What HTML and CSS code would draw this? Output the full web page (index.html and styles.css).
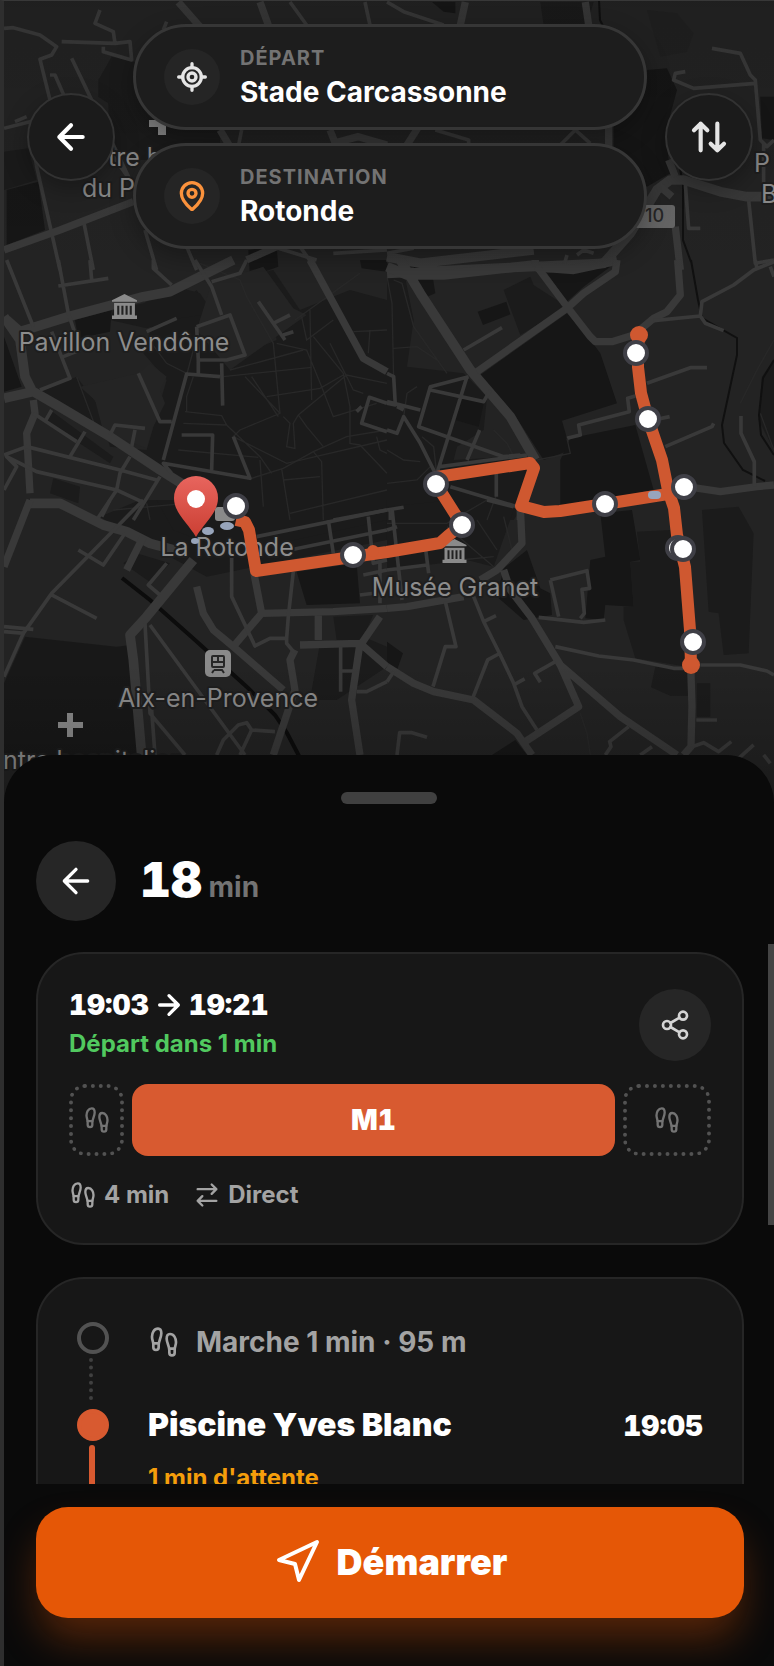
FILE: index.html
```html
<!DOCTYPE html>
<html lang="fr">
<head>
    <meta charset="UTF-8" />
    <meta name="viewport" content="width=device-width, initial-scale=1.0" />
    <title>Stade Carcassonne - Rotonde</title>
    <link rel="stylesheet" href="styles.css">
</head>
<body>
    <!-- shared icons -->
    <svg class="sprite" aria-hidden="true">
        <symbol id="arrow-left" viewBox="0 0 24 24"><path d="m12 19-7-7 7-7M19 12H5" /></symbol>
        <symbol id="arrow-right" viewBox="0 0 24 24"><path d="m12 5 7 7-7 7M5 12h14" /></symbol>
        <symbol id="footprints" viewBox="0 0 24 24">
            <path d="M4 16v-2.38C4 11.5 2.97 10.5 3 8c.03-2.72 1.49-6 4.5-6C9.37 2 10 3.8 10 5.5c0 3.11-2 5.66-2 8.68V16a2 2 0 1 1-4 0Z" />
            <path d="M20 20v-2.38c0-2.12 1.03-3.12 1-5.62-.03-2.72-1.49-6-4.5-6C14.63 6 14 7.8 14 9.5c0 3.11 2 5.66 2 8.68V20a2 2 0 1 0 4 0Z" />
            <path d="M16 17h4M4 13h4" />
        </symbol>
        <symbol id="museum" viewBox="0 0 72 72">
            <path d="M36 0 72 18v4H0v-4ZM6 26h60v36h6v10H0V62h6Z" />
            <path class="museum-gap" d="M18 34v26M30 34v26M42 34v26M54 34v26" />
        </symbol>
    </svg>

    <div class="app">
        <div class="map">
            <svg class="map-canvas" viewBox="4 1 770 840" preserveAspectRatio="xMidYMin slice">
                <defs>
                    <linearGradient id="pin-fill" x1="0" y1="0" x2="0" y2="1">
                        <stop offset="0" stop-color="#e8655e" />
                        <stop offset="1" stop-color="#cb3f33" />
                    </linearGradient>
                </defs>

                <!-- parks and built-up areas -->
                <g transform="scale(.3333)">
                    <path class="area" d="M335 170 400 185 660 390V480H400L330 440 325 310 295 290V240Z" />
                    <path class="area-dark" d="M20 570 115 545 135 690 20 735Z" />
                    <path class="area" d="M12 455 85 445 110 540 12 570Z" />
                    <path class="area-dark" d="M745 750 830 740 835 800 750 830Z" />
                </g>
                <g transform="translate(387 0) scale(.3333)">
                    <path class="area-dark" d="M135 6H205V40L170 35Z" />
                    <path class="area" d="M460 6H620L600 75H470Z" />
                    <path class="area-dark" d="M780 210 840 205 870 270 835 400 850 520 780 560 680 440V380Z" />
                    <path class="area-dark" d="M1120 290H1161V420L1125 415Z" />
                    <path class="area" d="M780 30 870 40 920 100 900 155 820 170Z" opacity=".3" />
                </g>
                <g transform="translate(0 260) scale(.3333)">
                    <path class="area" d="M120 395 230 350 290 430 330 560 440 570 500 360 430 280 455 200 590 90 640 170 690 170 735 280 830 240 780 40 820 30 900 150 1050 90 1161 120V780H650L480 630Z" />
                    <path class="area" d="M530 80 600 100 640 160 540 175 440 205 330 180 340 150 430 130Z" />
                    <path class="area-dark" d="M225 180 335 150 330 215 235 235Z" />
                    <path class="area-dark" d="M12 230 65 380 12 395Z" />
                    <path class="area-dark" d="M1080 0H1161V35L1085 25Z" />
                    <path class="area" d="M150 450 340 590 330 610 140 485ZM160 655 240 680 235 730 150 700Z" />
                    <path class="land" d="M240 380 415 340 450 310 500 350 480 390 495 430 460 500 440 565 310 515 285 420Z" />
                    <path class="land" d="M635 70 790 20 880 145 920 165 690 330 590 210Z" />
                </g>
                <g transform="translate(387 260) scale(.3333)">
                    <path class="area" d="M0 10 50 30 80 180 60 320 230 340 300 410 290 510 210 560 200 600 380 590 450 605 420 720 380 780H0Z" />
                    <path class="area-dark" d="M280 345 540 160 610 240 640 280 690 430 525 482 550 570 470 600 380 460Z" />
                    <path class="area-dark" d="M480 40 670 20 590 80 540 125Z" />
                    <path class="area-dark" d="M520 600 550 535 745 495 800 690 520 740Z" />
                    <path class="area" d="M350 90 430 50 440 75 540 140 400 225Z" />
                    <path class="area-dark" d="M272 155 358 125 370 163 288 195ZM215 410 290 430 275 500 205 480Z" />
                    <path class="area" d="M1161 300 1125 350 1115 480 1161 570Z" />
                    <path class="area-dark" d="M75 30Q90 0 130 5L145 100 110 115Z" />
                </g>
                <g transform="translate(0 500) scale(.3333)">
                    <path class="area-dark" d="M75 410 350 440 390 435 415 765H12V550Z" opacity=".75" />
                    <path class="area" d="M300 50 420 0H1161V120L620 230 400 110Z" />
                    <path class="area-dark" d="M890 215 1070 190 1080 310 920 315Z" />
                    <path class="area" d="M1000 350 1120 345 1090 410 1161 440V500L1010 600H930L960 430 1010 420ZM410 160 510 190 455 250 370 190Z" />
                    <path class="area" d="M470 0H1161V60L700 160 520 90Z" />
                </g>
                <g transform="translate(387 500) scale(.3333)">
                    <path class="area" d="M0 20 200 0H380V30L320 200 240 180 0 210Z" />
                    <path class="area-dark" d="M640 40 735 30 760 180 730 185 740 320 655 315 650 360 595 355 610 180 655 170Z" />
                    <path class="area" d="M750 95 850 90 870 130 900 500 745 475 710 360V320H740L730 185H760Z" />
                    <path class="area" d="M945 30 1055 20 1100 100 1085 460 1010 465 995 340 965 335Z" />
                    <path class="area-dark" d="M350 205 420 150 460 265 490 280 495 345 410 360 330 290Z" />
                    <path class="area" d="M805 500 900 510 905 587H850L792 562ZM930 550H970V650H930Z" />
                    <path class="area-dark" d="M315 765 385 720 420 765ZM0 425 48 460 30 510 0 490Z" />
                </g>

                <!-- alleys of the old town -->
                <g class="lane" transform="translate(0 260) scale(.3333)">
                    <path d="M600 10 720 60 740 110 820 250 840 460 720 510 700 530 860 610 1161 540M670 350 935 322M690 330 910 270M560 345 580 270 600 190M555 455 665 467 680 495 780 590 815 640M550 490 680 495M535 570 775 592M560 455V410L580 350" />
                    <path d="M735 350 840 460M755 350 835 470M850 470 870 490 860 560 885 565 880 490 895 465 1040 345 1161 370M895 465 920 500 970 560M885 180 1080 40M830 250 920 270 965 380 1000 470 1130 430M800 410 960 385 1030 345M930 150 935 420M940 230 1030 340 1050 440 1050 550 1080 555 1161 640M1060 215 1161 210M1110 210 1105 280" />
                    <path d="M755 655 850 625 940 575 1040 530 1161 510M845 625 870 780M940 575 965 605 970 780M1130 530 1140 570 1161 580M850 660 960 650M870 760 1161 690M780 600 790 740M905 170 920 240 1000 180M990 250 1060 390 1090 400M340 750 560 730M440 730 450 780M230 350 290 510M440 230 500 310 560 340" />
                </g>
                <g class="lane" transform="translate(387 260) scale(.3333)">
                    <path d="M0 50 15 130 20 360M20 60 45 70 80 200 180 340M20 265 90 260 150 300M90 380 60 400 50 470M0 570 50 600 100 605M105 530 140 560 150 650M0 670 90 660 130 620M320 510 360 550 380 590M1161 240 1110 330 1060 430M1120 460 1161 570M300 780 330 700" />
                </g>
                <g class="lane" transform="translate(387 500) scale(.3333)">
                    <path d="M0 70 180 70 300 0M180 80 320 200M220 180 320 170M270 60 330 150M350 50 380 170M580 640 600 700 610 765" />
                </g>

                <!-- railway -->
                <path class="rail" d="M122 578 150 600 195 640 248 688 275 715 287 733 299 756" />
                <path class="river" d="M599 0 600 20 610 40M680 168 683 185 683 240 691 262M691 260 698 300 702 318 737 338 737 355 722 425 724 443 743 470 765 481M774 360 763 378 759 415 761 435 774 455" />

                <!-- streets -->
                <g class="street" transform="scale(.3333)">
                    <path class="avenue" d="M535 6 600 80M780 6 805 75" />
                    <path d="M12 85 40 83 120 105 170 140 155 165 120 178 150 300M300 30 285 70 340 95 345 130 390 125 395 180 310 155V140M345 130 185 125M500 65 490 90M870 6 920 75M1095 6 1110 75" />
                    <path d="M150 225H165L215 340M215 175 270 290 400 560M45 365 80 350M12 385 90 365 110 500 180 810M250 660 280 810M340 470 390 540M435 690 470 810M560 740 590 810" />
                    <path class="avenue" d="M12 750 180 690 400 605M740 780 830 740" />
                    <path class="avenue" d="M660 390 690 440M990 390 1010 440M1000 430 1075 410 1161 435" />
                    <path d="M725 390 715 440M820 740 950 780M900 740 950 810M1161 750 1000 760" />
                </g>
                <g class="street" transform="translate(387 0) scale(.3333)">
                    <path class="avenue" d="M235 6 220 75M595 6 605 75M95 380 60 435M665 380V440" />
                    <path d="M0 6 50 35 170 75M145 390 245 420V440M520 435 565 390 610 430M895 215 865 220 860 240 920 265 1105 250M975 145 1060 160 1090 225 1105 240 1120 420 1140 440 1161 420M1130 430V560M895 550 905 685H940M1085 600 1105 790 1161 780" />
                    <path class="boulevard" d="M0 770 100 790 440 750M0 820 650 790 730 700 810 570 850 540H890L1000 575 1080 590H1161" />
                    <path class="avenue" d="M855 590 820 560M865 680 880 810M845 480 865 530" />
                    <path d="M0 760 80 745M540 765 530 800M570 765 590 750 620 760" />
                </g>
                <g class="street" transform="translate(0 260) scale(.3333)">
                    <path class="boulevard" d="M20 180 60 215 205 170 430 110 510 95 600 50 700 0M12 170 60 240 75 350 100 400M12 415 100 395 170 435 330 530 480 630 560 680" />
                    <path d="M20 0 100 200M175 0 205 160 225 220M270 0 275 60M175 78 325 55M460 0V25L515 75M585 0 635 80 665 165M740 0 720 40 635 65M155 215 210 355 120 390M190 290 240 270M440 215 530 175M590 200 690 165 735 285 680 300H595L590 200M595 300V340M665 310 668 437M660 350 560 342 490 600M415 340 480 485H515M775 125 820 190 855 240M820 190 870 165M850 225 880 215" />
                    <path class="avenue" d="M930 0 1090 295 1161 335M100 420 105 460 80 520 90 700" />
                    <path d="M100 460 230 545M155 450 135 485M255 515 210 590M330 525 345 495 435 505M405 510 395 560M545 525H638L635 630M700 530 750 655 490 610 515 640M12 585 80 560 360 630 470 660M390 590 360 640 350 690 290 780M12 690 50 620 20 590 110 635 350 690 425 725M480 650 400 780M1161 515 1085 490 1108 412 1161 430M1085 440 1070 455M1000 780 1161 750" />
                </g>
                <g class="street" transform="translate(387 260) scale(.3333)">
                    <path class="boulevard" d="M40 0 100 100 250 330 370 470 445 600M0 20 60 45H170L440 15 450 20 560 28 690 0" />
                    <path class="avenue" d="M690 0 685 35 590 100 540 145 270 335M450 20 540 140 610 230 625 245H675L740 225 800 175 840 155 880 105 872 0M445 0V20" />
                    <path class="avenue" d="M900 680 1000 695 1110 680 1161 675M400 740V780" />
                    <path d="M230 270 345 203M0 340 20 350 25 435 0 430M0 425 100 450M0 510 30 520 50 470 100 550 145 640M30 440 50 450M240 350 150 640M245 350 130 380 95 500 350 590 400 585M130 390 290 425 310 390M240 600 278 510M160 620 420 585M190 680 390 740M328 640V710M0 750 50 742M10 750V780" />
                    <path d="M780 370 910 323H960M745 408 722 415 727 455 575 495 580 525 540 535M800 480 848 470M835 560 975 500 980 490M800 182 940 168 945 125 1040 75 1100 30 1161 5M940 168 955 190 1010 212M1105 0 1110 25M1150 20 1161 50M1062 468V520L1102 605V680" />
                    <path class="lane" d="M540 535 550 580 450 600" />
                </g>
                <g class="street" transform="translate(0 500) scale(.3333)">
                    <path class="boulevard" d="M90 10H180L310 75 380 95 450 130 560 160M580 180 440 350 390 405 400 480 425 765" />
                    <path class="avenue" d="M90 0 12 200M590 260 610 340 640 390 700 440 850 570M760 210 785 340 700 440M785 340 1000 335 1161 325M955 340V420M900 435 1080 430 1161 500M885 450 870 480 885 570 820 765M1085 430 1140 350M1080 430 1055 600 1080 765M430 110 380 210" />
                    <path d="M330 0 305 50M430 0 155 280 70 400 12 530M155 285 290 355M12 380 100 388M12 395 75 400M235 150 310 195 375 100M500 190 445 255 480 285M435 370 450 640 555 765M450 375 735 765M455 630 465 765M695 160V290L765 438 810 415H860L865 350 880 215M860 415V430L885 460M650 765 670 720 715 675 740 668 755 690 825 695M755 690 720 765M1022 440V575M1022 513H1060M1070 575H1100L1161 545M770 110 1161 30M870 150 1161 90M985 60 1000 160M1105 50 1120 190 1161 180M1090 225 1161 210M1080 285 1161 275M1140 190V310" />
                </g>
                <g class="street" transform="translate(387 500) scale(.3333)">
                    <path class="avenue" d="M400 20 405 130 330 210 280 240M0 325 60 320 230 290M350 210 370 270 435 355 520 495 700 650 870 765M0 500 80 550 140 575 260 600 390 700 435 765M520 495 575 620 415 725M912 520 915 620 912 740 890 765" />
                    <path d="M15 25 45 300M0 90 30 80M0 210 120 195M115 140 125 220M175 305 207 440H175L138 560M260 290 290 365 340 465 380 550 405 620 450 690M290 365 327 347M335 462 302 480 258 592M380 555 413 537M505 485 443 520 460 547M300 0 380 20M455 352 590 367 655 360M490 240 600 212 608 265 585 268 592 340 580 355M490 240 515 350M505 440 635 468 740 480 860 505H890M940 495H1060L1140 513 1161 525M928 660H990M30 765 38 698H75L120 712M725 680 668 725 672 740 655 765M795 740 760 765M915 740 950 728 995 755 1033 725M1050 780 1100 735M1130 765 1150 790M0 545 20 515" />
                </g>

                <!-- places -->
                <g class="poi">
                    <use href="#museum" x="112" y="294" width="25" height="25" />
                    <use href="#museum" x="442" y="539" width="25" height="24" />
                    <path d="M149 120H166V135H158V127H149ZM67 713H73V722H83V728H73V737H67V728H58V722H67Z" />
                    <rect x="205" y="650" width="26" height="27" rx="5" />
                    <rect x="635" y="205" width="40" height="23" rx="3" fill="#666" />
                    <rect x="215" y="507" width="20" height="14" rx="3" />
                </g>
                <g class="train">
                    <rect x="212" y="656" width="12" height="11" rx="1" />
                    <path d="M212 662H224M218 656V662M214 670H222L224 673M214 670 212 673" />
                </g>
                <g class="place">
                    <text x="108" y="166">tre h</text>
                    <text x="82" y="197">du P</text>
                    <text x="754" y="172">P</text>
                    <text x="761" y="203">B</text>
                    <text x="124" y="351" text-anchor="middle">Pavillon Vendôme</text>
                    <text x="227" y="556" text-anchor="middle">La Rotonde</text>
                    <text x="455" y="596" text-anchor="middle">Musée Granet</text>
                    <text x="218" y="707" text-anchor="middle">Aix-en-Provence</text>
                    <text x="3" y="769">ntre hospitalier</text>
                </g>
                <text class="road-number" x="645" y="222">10</text>

                <!-- M1 line -->
                <g class="route">
                    <path d="M236 520 245 522 249 530 256 571 352 557 387 552 440 543 449 535 462 525 436 484 437 477 530 463 534 468 521 506 544 512 560 511 605 504 668 494" />
                    <path d="M639 335 638 353 638 367 641 393 648 419 662 460 668 490 674 508 677 535 685 567 690 630 691 665" />
                </g>
                <circle class="route-end" cx="639" cy="335" r="9" />
                <circle class="route-end" cx="691" cy="665" r="9" />
                <circle class="route-end" cx="373" cy="551" r="6" />
                <g class="water">
                    <rect x="648" y="491" width="13" height="8" rx="4" />
                    <ellipse cx="208" cy="531" rx="6" ry="4" />
                    <ellipse cx="227" cy="526" rx="7" ry="4" />
                    <ellipse cx="195" cy="541" rx="4" ry="3" />
                </g>
                <g class="stop">
                    <circle cx="636" cy="353" r="11" />
                    <circle cx="648" cy="419" r="11" />
                    <circle cx="684" cy="487" r="11" />
                    <circle cx="605" cy="504" r="11" />
                    <circle cx="436" cy="484" r="11" />
                    <circle cx="462" cy="525" r="11" />
                    <circle cx="678" cy="548" r="11" />
                    <circle cx="683" cy="549" r="11" />
                    <circle cx="693" cy="642" r="11" />
                    <circle cx="353" cy="555" r="11" />
                    <circle cx="236" cy="506" r="11" />
                </g>
                <path fill="url(#pin-fill)" d="M196 537C188 523 174 513 174 498a22 22 0 0 1 44 0C218 513 204 523 196 537Z" />
                <circle fill="#fff" cx="196" cy="499" r="9" />
            </svg>

            <div class="search">
                <button class="round-btn" aria-label="Retour">
                    <svg class="icon icon-40 bold"><use href="#arrow-left" /></svg>
                </button>
                <div class="fields">
                    <button class="field">
                        <span class="field-icon">
                            <svg class="icon icon-32 bold" viewBox="0 0 24 24"><path d="M2 12h3M19 12h3M12 2v3M12 19v3" /><circle cx="12" cy="12" r="7" /><circle cx="12" cy="12" r="3" /></svg>
                        </span>
                        <span class="field-text">
                            <span class="field-label">DÉPART</span>
                            <span class="field-value">Stade Carcassonne</span>
                        </span>
                    </button>
                    <button class="field">
                        <span class="field-icon destination">
                            <svg class="icon icon-32 bold" viewBox="0 0 24 24"><path d="M20 10c0 4.99-5.54 10.19-7.4 11.8a1 1 0 0 1-1.2 0C9.54 20.19 4 14.99 4 10a8 8 0 0 1 16 0" /><circle cx="12" cy="10" r="3" /></svg>
                        </span>
                        <span class="field-text">
                            <span class="field-label">DESTINATION</span>
                            <span class="field-value">Rotonde</span>
                        </span>
                    </button>
                </div>
                <button class="round-btn swap" aria-label="Inverser">
                    <svg class="icon icon-40 bold" viewBox="0 0 24 24"><path d="m21 16-4 4-4-4M17 20V4M3 8l4-4 4 4M7 4v16" /></svg>
                </button>
            </div>
        </div>

        <div class="sheet">
            <div class="handle"></div>
            <div class="sheet-header">
                <button class="back-btn" aria-label="Retour aux trajets">
                    <svg class="icon icon-40"><use href="#arrow-left" /></svg>
                </button>
                <h1><span class="duration">18</span> <span class="unit">min</span></h1>
            </div>

            <div class="details">
                <div class="details-thumb"></div>
                <div class="card summary">
                    <div class="summary-top">
                        <div>
                            <div class="times">
                                <span>19:03</span>
                                <svg class="icon icon-32 bold"><use href="#arrow-right" /></svg>
                                <span>19:21</span>
                            </div>
                            <div class="departure">Départ dans 1 min</div>
                        </div>
                        <button class="share-btn" aria-label="Partager">
                            <svg class="icon icon-32" viewBox="0 0 24 24"><circle cx="18" cy="5" r="3" /><circle cx="6" cy="12" r="3" /><circle cx="18" cy="19" r="3" /><path d="m8.6 13.5 6.8 4M15.4 6.5l-6.8 4" /></svg>
                        </button>
                    </div>
                    <div class="segments">
                        <div class="walk"><svg class="icon icon-28"><use href="#footprints" /></svg></div>
                        <div class="bus">M1</div>
                        <div class="walk"><svg class="icon icon-28"><use href="#footprints" /></svg></div>
                    </div>
                    <div class="meta">
                        <span class="meta-item">
                            <svg class="icon icon-28"><use href="#footprints" /></svg>
                            4 min
                        </span>
                        <span class="meta-item">
                            <svg class="icon icon-28" viewBox="0 0 24 24"><path d="m16 3 4 4-4 4M20 7H4M8 21l-4-4 4-4M4 17h16" /></svg>
                            Direct
                        </span>
                    </div>
                </div>

                <div class="card steps">
                    <div class="step">
                        <div class="marker">
                            <span class="dot"></span>
                            <span class="line"></span>
                        </div>
                        <div class="step-walk">
                            <svg class="icon icon-32"><use href="#footprints" /></svg>
                            <span>Marche 1 min · 95 m</span>
                        </div>
                    </div>
                    <div class="step ride">
                        <div class="marker">
                            <span class="dot"></span>
                            <span class="line"></span>
                        </div>
                        <div class="step-body">
                            <div class="step-head">
                                <span class="stop-name">Piscine Yves Blanc</span>
                                <span class="stop-time">19:05</span>
                            </div>
                            <div class="wait">1 min d'attente</div>
                        </div>
                    </div>
                </div>
            </div>

            <div class="sheet-footer">
                <button class="start-btn">
                    <svg class="icon icon-48" viewBox="0 0 24 24"><path d="M3 11 22 2 13 21 11 13Z" /></svg>
                    Démarrer
                </button>
            </div>
        </div>
    </div>
</body>
</html>
```
FILE: styles.css
```css
* {
    box-sizing: border-box;
}

body {
    margin: 0;
    background-color: #0a0a0a;
    color: #ffffff;
    font-family: Inter, "Liberation Sans", sans-serif;
}

button {
    margin: 0;
    padding: 0;
    border: none;
    color: inherit;
    font-family: inherit;
    cursor: pointer;
}

.sprite {
    position: absolute;
    width: 0;
    height: 0;
}

.icon {
    display: block;
    flex: none;
    fill: none;
    stroke: currentColor;
    stroke-width: 2;
    stroke-linecap: round;
    stroke-linejoin: round;
}

.icon.bold { stroke-width: 2.5; }
.icon-28 { width: 28px; height: 28px; }
.icon-32 { width: 32px; height: 32px; }
.icon-40 { width: 40px; height: 40px; }
.icon-48 { width: 48px; height: 48px; }

.app {
    display: flex;
    flex-direction: column;
    height: 100vh;
    overflow: hidden;
    border-top: 1px solid #383838;
    border-left: 4px solid #2e2e2e;
}

/* map */
.map {
    position: relative;
    flex: 1;
    min-height: 330px;
    background-color: #232323;
    overflow: hidden;
}

.map::after {
    content: "";
    position: absolute;
    inset: 0;
    background: linear-gradient(rgba(0, 0, 0, 0.1), transparent 35%, transparent 80%, rgba(0, 0, 0, 0.3));
    pointer-events: none;
}

.map-canvas {
    position: absolute;
    inset: 0;
    width: 100%;
    height: 100%;
}

.land { fill: #242424; }
.area { fill: #1b1b1b; }
.area-dark { fill: #161616; }

.street {
    fill: none;
    stroke: #393939;
    stroke-width: 11;
    stroke-linejoin: round;
}

.street .avenue { stroke-width: 22; }
.street .boulevard { stroke-width: 29; }

.lane,
.street .lane {
    fill: none;
    stroke: #282828;
    stroke-width: 4;
}

.rail {
    fill: none;
    stroke: #0c0c0c;
    stroke-width: 4;
}

.river {
    fill: none;
    stroke: #101010;
    stroke-width: 2;
}

.poi { fill: #8a8a8a; }

.museum-gap {
    fill: none;
    stroke: #222222;
    stroke-width: 6;
}

.train {
    fill: none;
    stroke: #262626;
    stroke-width: 2;
}

.place text {
    fill: #8c8c8c;
    stroke: #1e1e1e;
    stroke-width: 4px;
    stroke-linejoin: round;
    paint-order: stroke;
    font-size: 25px;
}

.road-number {
    fill: #262626;
    font-size: 18px;
    font-weight: 500;
}

.route {
    fill: none;
    stroke: #cf5830;
    stroke-width: 12;
    stroke-linejoin: round;
}

.route-end { fill: #cf5830; }
.water { fill: #98a5bb; }

.stop {
    fill: #ffffff;
    stroke: #3f3f46;
    stroke-width: 4;
}

/* departure / destination */
.search {
    position: relative;
    z-index: 1;
    display: flex;
    align-items: center;
    gap: 18px;
    padding: 23px 21px 0 23px;
}

.round-btn {
    display: flex;
    flex: none;
    align-items: center;
    justify-content: center;
    width: 88px;
    height: 88px;
    border: 2px solid #323232;
    border-radius: 50%;
    background-color: #1b1b1b;
    box-shadow: 0 8px 24px rgba(0, 0, 0, 0.3);
}

.swap { color: #e5e5e5; }

.fields {
    display: flex;
    flex: 1;
    flex-direction: column;
    gap: 13px;
    min-width: 0;
}

.field {
    display: flex;
    align-items: center;
    gap: 20px;
    height: 106px;
    padding: 0 28px;
    border: 3px solid #363636;
    border-radius: 53px;
    background-color: #1d1d1d;
    text-align: left;
    box-shadow: 0 8px 24px rgba(0, 0, 0, 0.3);
}

.field-icon {
    display: flex;
    flex: none;
    align-items: center;
    justify-content: center;
    width: 56px;
    height: 56px;
    border-radius: 50%;
    background-color: #252525;
    color: #e5e5e5;
}

.field-icon.destination { color: #fb923c; }

.field-text { padding-top: 1px; }

.field-label,
.field-value {
    display: block;
    white-space: nowrap;
}

.field-label {
    color: #737373;
    font-size: 20px;
    font-weight: 700;
    line-height: 28px;
    letter-spacing: 1px;
}

.field-value {
    font-size: 28px;
    font-weight: 700;
    line-height: 40px;
}

/* bottom sheet */
.sheet {
    position: relative;
    flex: none;
    margin-top: -75px;
    border-radius: 48px 48px 0 0;
    background-color: #0a0a0a;
    overflow: hidden;
}

.handle {
    width: 96px;
    height: 12px;
    margin: 37px auto;
    border-radius: 6px;
    background-color: #404040;
}

.sheet-header {
    display: flex;
    align-items: center;
    gap: 24px;
    padding: 0 32px 23px;
}

.back-btn,
.share-btn {
    display: flex;
    align-items: center;
    justify-content: center;
    border-radius: 50%;
    background-color: #262626;
}

.back-btn {
    width: 80px;
    height: 80px;
}

h1 {
    margin: 0;
    padding-top: 4px;
    font-size: 28px;
    line-height: 48px;
}

.duration {
    font-size: 48px;
    font-weight: 900;
    font-variant-numeric: tabular-nums;
}

.unit {
    color: #737373;
    font-weight: 700;
}

.details {
    position: relative;
    display: flex;
    flex-direction: column;
    gap: 32px;
    height: 540px;
    padding: 8px 30px 0 32px;
    overflow: hidden;
}

.details-thumb {
    position: absolute;
    top: 0;
    right: 0;
    width: 6px;
    height: 52%;
    background-color: #444444;
}

.card {
    flex: none;
    border: 2px solid #262626;
    border-radius: 48px;
    background-color: #171717;
}

.summary {
    padding: 32px 31px;
}

.summary-top {
    display: flex;
    align-items: center;
    justify-content: space-between;
    margin-bottom: 20px;
}

.times {
    display: flex;
    align-items: center;
    gap: 4px;
    font-size: 28px;
    font-weight: 900;
    line-height: 38px;
    font-variant-numeric: tabular-nums;
}

.departure {
    color: #51c95f;
    font-size: 24px;
    font-weight: 700;
    line-height: 40px;
}

.share-btn {
    width: 72px;
    height: 72px;
    color: #d4d4d4;
}

.segments {
    display: grid;
    grid-template-columns: 55fr 481fr 88fr;
    gap: 8px;
    height: 72px;
}

.walk,
.bus {
    display: flex;
    align-items: center;
    justify-content: center;
    border-radius: 16px;
}

.walk {
    border: 4px dotted #525252;
    color: #737373;
}

.bus {
    background-color: #d85a30;
    font-size: 28px;
    font-weight: 900;
    font-variant-numeric: tabular-nums;
}

.meta {
    display: flex;
    gap: 24px;
    margin-top: 23px;
    color: #a3a3a3;
    font-size: 24px;
    font-weight: 700;
    line-height: 32px;
}

.meta-item {
    display: flex;
    align-items: center;
    gap: 7px;
}

.steps {
    padding: 43px 39px 40px;
}

.step {
    display: flex;
    gap: 39px;
    min-height: 87px;
}

.marker {
    display: flex;
    flex: none;
    flex-direction: column;
    gap: 4px;
    width: 32px;
}

.dot {
    width: 32px;
    height: 32px;
    border: 4px solid #525252;
    border-radius: 50%;
}

.line {
    height: 42px;
    margin-left: 12px;
    border-left: 4px dotted #404040;
}

.ride { min-height: 200px; }

.ride .dot {
    border-color: #d85a30;
    background-color: #d85a30;
}

.ride .line {
    flex: 1;
    width: 6px;
    border: none;
    border-radius: 3px;
    background-color: #d85a30;
}

.step-walk {
    display: flex;
    align-items: center;
    gap: 16px;
    height: 40px;
    color: #a3a3a3;
    font-size: 28px;
    font-weight: 700;
}

.step-body {
    flex: 1;
}

.step-head {
    display: flex;
    align-items: baseline;
    justify-content: space-between;
    line-height: 32px;
}

.stop-name {
    font-size: 32px;
    font-weight: 900;
}

.stop-time {
    font-size: 28px;
    font-weight: 900;
    font-variant-numeric: tabular-nums;
}

.wait {
    margin-top: 20px;
    color: #f59e0b;
    font-size: 24px;
    font-weight: 700;
    line-height: 32px;
}

.sheet-footer {
    padding: 23px 30px 48px 32px;
}

.start-btn {
    display: flex;
    align-items: center;
    justify-content: center;
    gap: 16px;
    width: 100%;
    height: 111px;
    padding-bottom: 1px;
    border-radius: 32px;
    background-color: #e55706;
    font-size: 36px;
    font-weight: 900;
    box-shadow: 0 24px 40px -4px rgba(229, 87, 6, 0.35);
}
```
